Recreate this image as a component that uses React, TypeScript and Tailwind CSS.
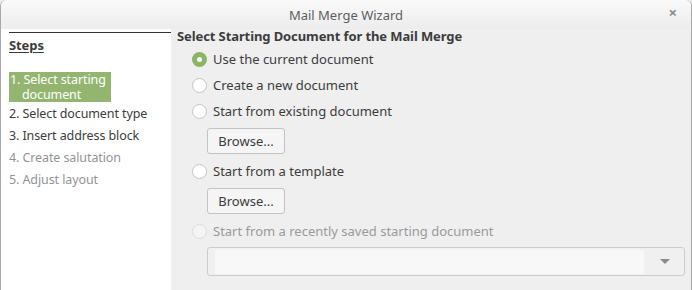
import React from 'react';

const font = { fontFamily: '"Noto Sans", "DejaVu Sans", sans-serif' };

const Radio: React.FC<{ checked?: boolean; disabled?: boolean }> = ({ checked, disabled }) => {
  if (checked) {
    return (
      <span className="w-[15px] h-[15px] rounded-full bg-[#8bb565] flex items-center justify-center shrink-0">
        <span className="w-[5px] h-[5px] rounded-full bg-white" />
      </span>
    );
  }
  return (
    <span
      className={
        disabled
          ? 'w-[15px] h-[15px] rounded-full border border-[#dcdcdc] bg-[#f4f4f4] shrink-0'
          : 'w-[15px] h-[15px] rounded-full border border-[#c4c4c4] bg-white shrink-0'
      }
    />
  );
};

const Option: React.FC<{ label: string; checked?: boolean; disabled?: boolean; className?: string }> = ({
  label,
  checked,
  disabled,
  className,
}) => (
  <div className={`flex items-center h-[26px] pl-[15px] gap-[6px] ${className ?? ''}`}>
    <Radio checked={checked} disabled={disabled} />
    <span className={disabled ? 'text-[#9a9a9a]' : 'text-[#3c3c3c]'}>{label}</span>
  </div>
);

const BrowseButton: React.FC = () => (
  <div className="ml-[30px] mt-[4px] w-[78px] h-[26px] rounded-[3px] border border-[#c3c3c3] bg-[#f5f5f5] flex items-center justify-center text-[#3c3c3c]">
    Browse...
  </div>
);

const App: React.FC = () => {
  return (
    <div className="w-[692px] h-[290px] overflow-hidden text-[13px] leading-[16px] bg-[#efefef]" style={font}>
      <div className="h-full border-x border-[#a9a9a9] rounded-t-[6px] flex flex-col">
        {/* title bar */}
        <div className="h-[29px] shrink-0 rounded-t-[6px] bg-gradient-to-b from-[#fafafa] to-[#ececec] relative flex items-center justify-center">
          <span className="text-[#5e5e5e] text-[13px]">Mail Merge Wizard</span>
          <span className="absolute right-[14px] top-[4px] text-[#8a8a8a] text-[15px] font-bold">×</span>
        </div>

        <div className="flex flex-1">
          {/* steps */}
          <div className="w-[170px] bg-white pt-[3px]">
            <div className="ml-[8px] border-t border-[#333333] pt-[3px] text-[12.5px] tracking-[-0.1px]">
              <div className="font-bold underline underline-offset-2 text-[#3c3c3c] leading-[18px] text-[13px]">Steps</div>
              <div className="mt-[18px] w-[102px] h-[30px] bg-[#93b570] text-white px-[1px] leading-[15px] overflow-hidden">
                <div className="pl-[12px] [text-indent:-12px]">1. Select starting document</div>
              </div>
              <div className="mt-[1px] flex flex-col text-[#3c3c3c] whitespace-nowrap">
                <div className="h-[22px] flex items-center">2. Select document type</div>
                <div className="h-[22px] flex items-center">3. Insert address block</div>
                <div className="h-[22px] flex items-center text-[#939393]">4. Create salutation</div>
                <div className="h-[22px] flex items-center text-[#939393]">5. Adjust layout</div>
              </div>
            </div>
          </div>

          {/* main */}
          <div className="flex-1 pl-[6px] pr-[6px]">
            <div className="font-bold text-[#3c3c3c] leading-[15px] tracking-[-0.1px]">Select Starting Document for the Mail Merge</div>
            <Option className="mt-[2px]" label="Use the current document" checked />
            <Option label="Create a new document" />
            <Option label="Start from existing document" />
            <BrowseButton />
            <Option className="mt-[4px]" label="Start from a template" />
            <BrowseButton />
            <Option className="mt-[4px]" label="Start from a recently saved starting document" disabled />
            <div className="ml-[30px] mt-[3px] h-[29px] rounded-[3px] border border-[#cccccc] bg-[#f0f0f0] flex items-center pl-[7px] pr-[14px]">
              <div className="flex-1 h-[24px] bg-[#f8f8f8]" />
              <svg width="10" height="6" viewBox="0 0 10 6" className="ml-[16px]">
                <path d="M0 0 L10 0 L5 5 Z" fill="#8a8a8a" />
              </svg>
            </div>
          </div>
        </div>
      </div>
    </div>
  );
};

export default App;
